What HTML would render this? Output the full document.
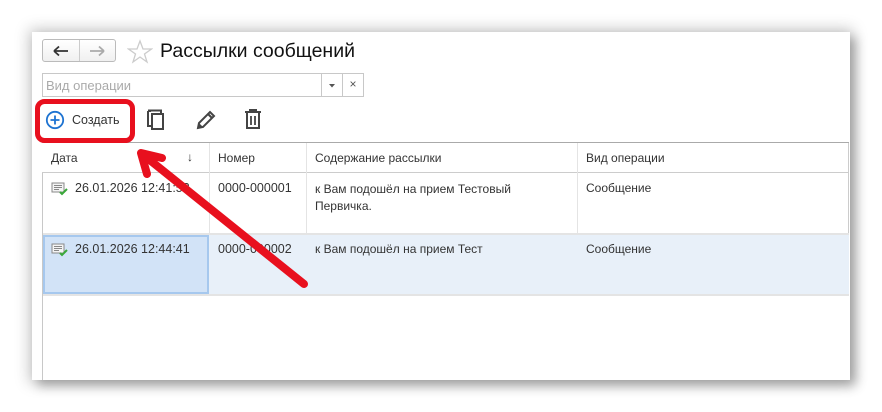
<!DOCTYPE html>
<html><head><meta charset="utf-8"><style>
*{margin:0;padding:0;box-sizing:border-box}
body{width:882px;height:412px;background:#fff;position:relative;overflow:hidden;font-family:"Liberation Sans",Arial,sans-serif;font-size:12px;color:#333}
.panel{position:absolute;left:32px;top:32px;width:818px;height:348px;background:#fff;box-shadow:0 0 14px 3px rgba(0,0,0,.22),6px 6px 10px rgba(0,0,0,.25)}
.a{position:absolute}
.nav{left:42px;top:39px;width:74px;height:23px;border:1px solid #bbb;border-radius:3px;background:linear-gradient(#fff,#f0f0f0)}
.nav:after{content:"";position:absolute;left:36px;top:0;width:1px;height:21px;background:#ccc}
.title{left:160px;top:40px;font-size:19.5px;color:#111}
.fld{left:42px;top:73px;width:322px;height:24px;border:1px solid #c8c8c8;background:#fff;color:#aaa;font-size:13px;padding:4px 3px}
.tbl{left:42px;top:142px;width:807px;height:238px;border-left:1px solid #c8c8c8;border-top:1px solid #aaa}
.hd{left:42px;top:143px;width:807px;height:30px;background:#fff;border-bottom:1px solid #ccc}
.cell{position:absolute;font-size:12px;color:#333}
.vl{position:absolute;width:1px;background:#e4e4e4}
</style></head><body>
<div class="panel"></div>
<div class="a nav">
<svg class="a" style="left:10px;top:5px" width="16" height="12"><path d="M1 6H15M1 6L6 1.5M1 6L6 10.5" stroke="#333" stroke-width="1.8" fill="none"/></svg>
<svg class="a" style="left:46px;top:5px" width="16" height="12"><path d="M1 6H15M15 6L10 1.5M15 6L10 10.5" stroke="#aaa" stroke-width="1.8" fill="none"/></svg>
</div>
<svg class="a" style="left:127px;top:39px" width="26" height="25"><path d="M13 2L16 10H24.5L17.5 15L20 23L13 18L6 23L8.5 15L1.5 10H10Z" fill="none" stroke="#ccc" stroke-width="1.3"/></svg>
<div class="a title">Рассылки сообщений</div>
<div class="a fld">Вид операции</div>
<div class="a" style="left:321px;top:73px;width:22px;height:24px;border:1px solid #c8c8c8;background:#fff"><svg style="position:absolute;left:7px;top:10px" width="7" height="4"><path d="M0 0H6L3 3.5Z" fill="#555"/></svg></div>
<div class="a" style="left:342px;top:73px;width:22px;height:24px;border:1px solid #c8c8c8;background:#fff;text-align:center;line-height:21px;font-size:12px;color:#555">×</div>
<svg class="a" style="left:45px;top:110px" width="20" height="20"><circle cx="10" cy="10" r="8.2" fill="none" stroke="#1e73d1" stroke-width="1.8"/><path d="M10 5.5V14.5M5.5 10H14.5" stroke="#1e73d1" stroke-width="1.8"/></svg>
<div class="a" style="left:72px;top:113px;font-size:12.5px;color:#333">Создать</div>
<svg class="a" style="left:146px;top:108px" width="22" height="24"><path d="M2 3V18H5M5 3H2" fill="none" stroke="#444" stroke-width="2"/><path d="M2 2.5H15V5" fill="none" stroke="#444" stroke-width="2"/><rect x="6" y="6" width="11" height="15" fill="none" stroke="#444" stroke-width="2"/></svg>
<svg class="a" style="left:195px;top:109px" width="22" height="22"><path d="M3 19L4 14L15 3L19 7L8 18Z" fill="none" stroke="#444" stroke-width="2"/><path d="M13 5L17 9" stroke="#444" stroke-width="2"/><path d="M3 19L4 14L8 18Z" fill="#444"/></svg>
<svg class="a" style="left:243px;top:108px" width="20" height="22"><path d="M2 4H18M7 4V2H13V4" fill="none" stroke="#444" stroke-width="2"/><path d="M4 5V20H16V5" fill="none" stroke="#444" stroke-width="2"/><path d="M8 8V17M12 8V17" stroke="#444" stroke-width="1.8"/></svg>
<div class="a tbl"></div>
<div class="a hd"></div>
<div class="vl" style="left:209px;top:143px;height:152px"></div>
<div class="vl" style="left:306px;top:143px;height:152px"></div>
<div class="vl" style="left:577px;top:143px;height:152px"></div>
<div class="vl" style="left:848px;top:143px;height:152px;background:#ccc"></div>
<div class="cell" style="left:51px;top:151px">Дата</div>
<div class="cell" style="left:187px;top:150px">↓</div>
<div class="cell" style="left:218px;top:151px">Номер</div>
<div class="cell" style="left:315px;top:151px">Содержание рассылки</div>
<div class="cell" style="left:586px;top:151px">Вид операции</div>
<div class="a" style="left:43px;top:233px;width:806px;height:2px;background:#e4e4e4"></div>
<div class="a" style="left:43px;top:235px;width:806px;height:59px;background:#e8f0f9"></div>
<div class="a" style="left:43px;top:235px;width:166px;height:59px;background:#d2e3f7;border:2px solid #a6c8ee"></div>
<div class="a" style="left:43px;top:294px;width:806px;height:2px;background:#e4e4e4"></div>
<svg class="a" style="left:51px;top:182px" width="18" height="14"><rect x="1" y="1" width="12" height="9" fill="#f4f4f4" stroke="#888"/><path d="M3 3.5H11M3 5.5H11M3 7.5H8" stroke="#888"/><path d="M9 10L11 12L16 7" stroke="#3aa83a" stroke-width="2" fill="none"/></svg>
<svg class="a" style="left:51px;top:243px" width="18" height="14"><rect x="1" y="1" width="12" height="9" fill="#f4f4f4" stroke="#888"/><path d="M3 3.5H11M3 5.5H11M3 7.5H8" stroke="#888"/><path d="M9 10L11 12L16 7" stroke="#3aa83a" stroke-width="2" fill="none"/></svg>
<div class="cell" style="left:75px;top:181px;font-size:12.5px">26.01.2026 12:41:53</div>
<div class="cell" style="left:218px;top:181px;font-size:12.5px">0000-000001</div>
<div class="cell" style="left:315px;top:181px;line-height:17px">к Вам подошёл на прием Тестовый<br>Первичка.</div>
<div class="cell" style="left:586px;top:181px">Сообщение</div>
<div class="cell" style="left:75px;top:242px;font-size:12.5px">26.01.2026 12:44:41</div>
<div class="cell" style="left:218px;top:242px;font-size:12.5px">0000-000002</div>
<div class="cell" style="left:315px;top:242px">к Вам подошёл на прием Тест</div>
<div class="cell" style="left:586px;top:242px">Сообщение</div>
<svg class="a" style="left:0;top:0" width="882" height="412"><rect x="37.5" y="101.5" width="95" height="39" rx="7" fill="none" stroke="#e8101e" stroke-width="5"/><path d="M304 284L141 153M141 153L162 158M141 153L147 174" stroke="#e8101e" stroke-width="8" stroke-linecap="round" fill="none"/></svg>
</body></html>
